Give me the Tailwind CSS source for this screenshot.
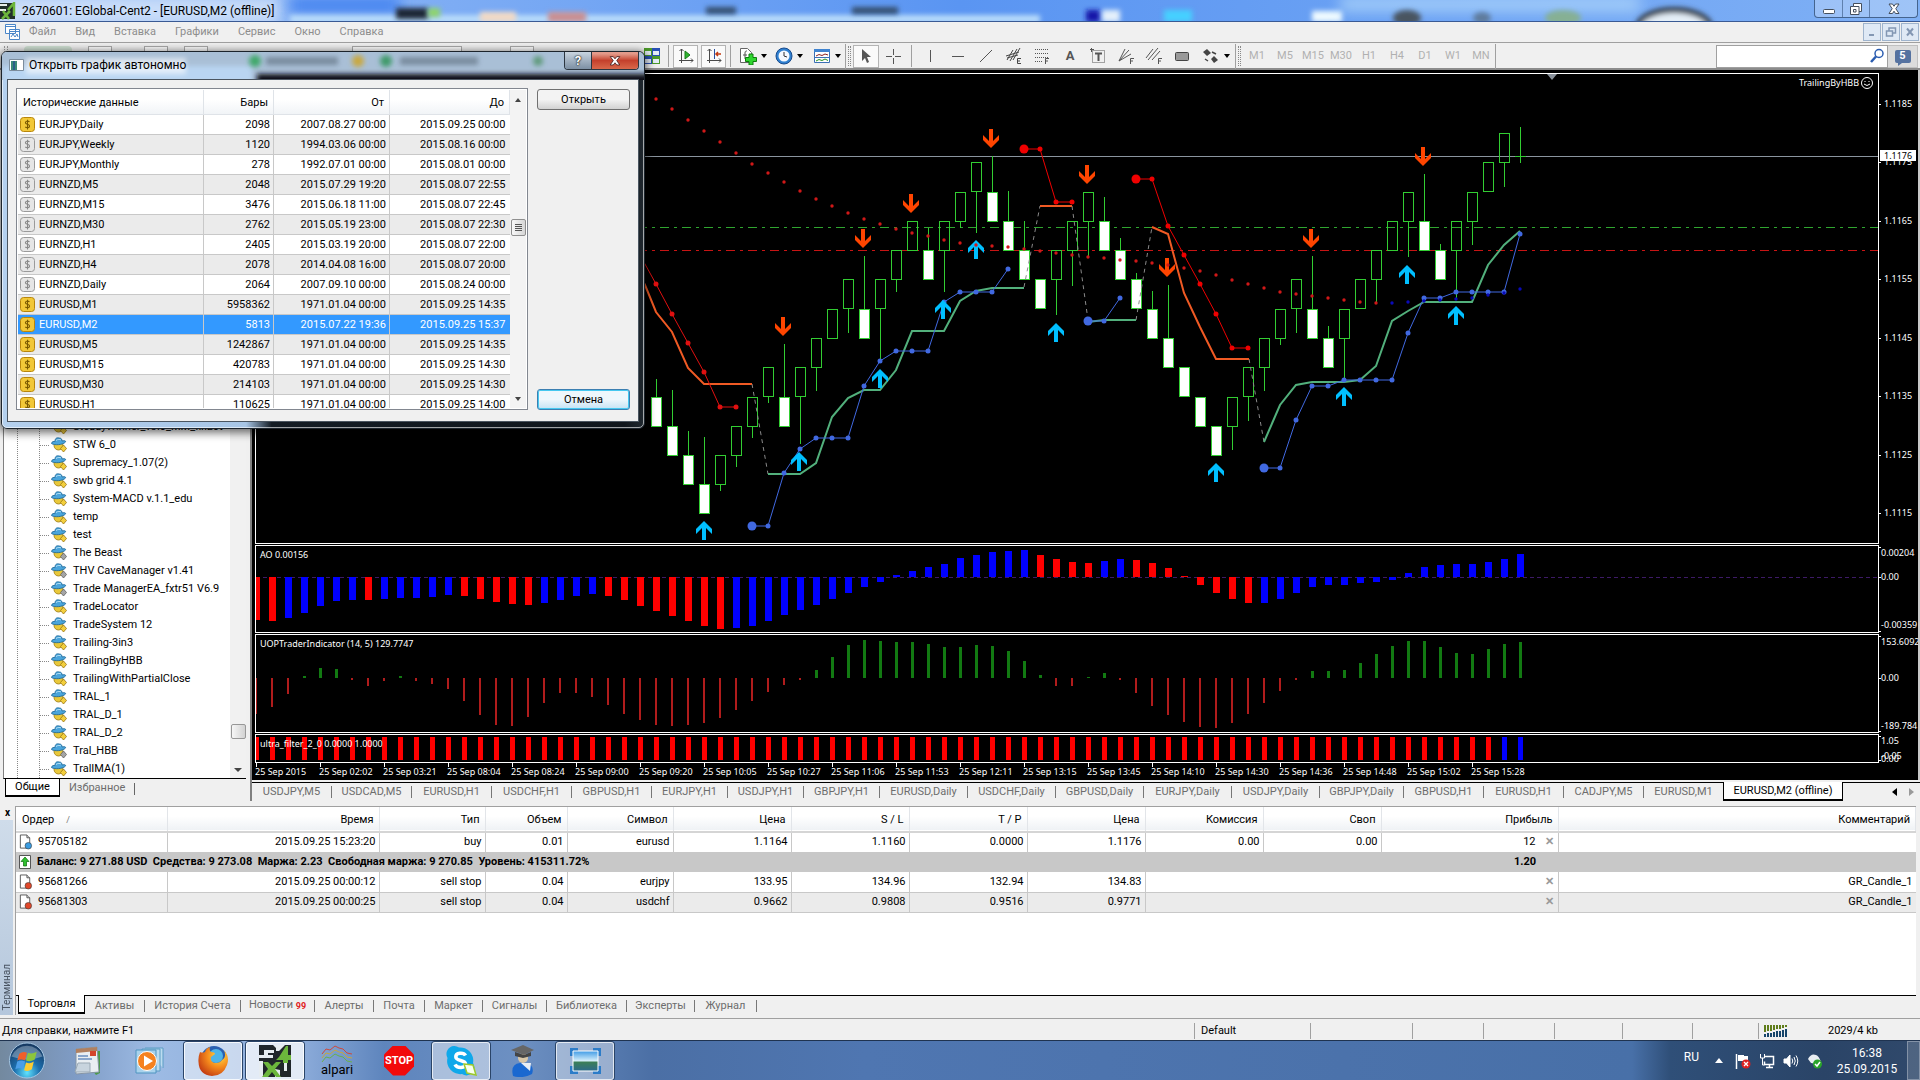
<!DOCTYPE html>
<html lang="ru">
<head>
<meta charset="utf-8">
<title>2670601: EGlobal-Cent2 - [EURUSD,M2 (offline)]</title>
<script src="https://cdn.jsdelivr.net/npm/@tailwindcss/browser@4"></script>
</head>
<body class="relative flex min-h-screen w-full flex-col overflow-x-hidden bg-[#f0f0f0] font-[Roboto,'Liberation_Sans',sans-serif] text-[11px] leading-4 text-black">

<svg class="absolute h-0 w-0" aria-hidden="true">
  <defs>
    <g id="hat">
      <circle cx="7.500" cy="8.500" r="4.500" fill="#e9c83a" stroke="#9c7a10" stroke-width=".8"/>
      <path d="M.5 6.500C1 4 3 4.500 4 4.500C4 1 6 .5 8 1C11 1 11 3 11 4C13 3.500 15 3.500 14.500 5C12 8 3 8.500 .5 6.500Z" fill="#4aa5dc" stroke="#1f6b9c" stroke-width=".9"/>
      <path d="M5 3.500c2-1.500 4-1.300 5-.5" stroke="#b5e2f7" fill="none"/>
    </g>
    <g id="ea"><use href="#hat"/><path d="M12.500 8l3 3.500-3 3.500-3-3.500z" fill="#f3cf3d" stroke="#9a7612" stroke-width=".8"/></g>
    <g id="eaoff"><use href="#hat"/><path d="M12.500 8l3 3.500-3 3.500-3-3.500z" fill="#a5a5a5" stroke="#5f5f5f" stroke-width=".8"/></g>
    <g id="dollar"><path d="M9.500 4.800C8 3.700 5.300 4 5.400 5.700C5.500 7.600 9.500 7 9.600 9C9.700 10.900 6.800 11 5.200 10M7.500 2.800v9.600" fill="none" stroke-width="1.100"/></g>
    <g id="page"><path d="M2.500.5h7l3 3v11h-10z" fill="#fff" stroke="#555"/><path d="M9.500.5v3h3" fill="#ddd" stroke="#555"/></g>
    <filter id="b1" x="-50%" y="-100%" width="200%" height="300%"><feGaussianBlur stdDeviation="2.500"/></filter>
    <filter id="b2" x="-20%" y="-100%" width="140%" height="300%"><feGaussianBlur stdDeviation="7"/></filter>
    <radialGradient id="orb" cx=".5" cy=".85" r=".8"><stop offset="0" stop-color="#5fe3ff"/><stop offset=".45" stop-color="#1c6fae"/><stop offset="1" stop-color="#173a63"/></radialGradient>
    <radialGradient id="fox" cx=".7" cy=".3" r=".8"><stop offset="0" stop-color="#ffe04a"/><stop offset=".5" stop-color="#f58a1c"/><stop offset="1" stop-color="#c23a12"/></radialGradient>
    <linearGradient id="sky" x2="0" y2="1"><stop offset="0" stop-color="#3f9be6"/><stop offset=".5" stop-color="#d8f0fa"/><stop offset=".55" stop-color="#3c7f56"/><stop offset="1" stop-color="#2d6a8c"/></linearGradient>
  </defs>
</svg>

<!-- Title bar -->
<header class="relative flex h-[22px] items-center overflow-hidden border-b border-[#3a5a94] bg-gradient-to-r from-[#9cc0f5] via-[#5a95f2] to-[#7fb0f5]">
  <svg class="absolute inset-0 h-full w-full" aria-hidden="true">
    <rect x="-20" y="-4" width="300" height="30" fill="#dce9fb" opacity=".75" filter="url(#b2)"/>
    <rect x="290" y="-2" width="110" height="14" fill="#3b7df0" filter="url(#b2)"/>
    <rect x="290" y="15" width="750" height="8" fill="#b8dbfa" filter="url(#b1)"/>
    <rect x="396" y="8" width="32" height="11" fill="#1c2834" filter="url(#b1)"/>
    <rect x="428" y="8" width="12" height="9" fill="#8fd46a" filter="url(#b1)"/>
    <rect x="480" y="12" width="36" height="10" fill="#f1d9c6" filter="url(#b1)"/>
    <rect x="548" y="12" width="38" height="10" fill="#c98f92" filter="url(#b1)"/>
    <rect x="706" y="7" width="30" height="7" fill="#35506e" filter="url(#b1)"/>
    <rect x="852" y="7" width="46" height="7" fill="#35506e" filter="url(#b1)"/>
    <rect x="1086" y="10" width="14" height="12" fill="#1218a8" filter="url(#b1)"/>
    <rect x="1102" y="10" width="18" height="12" fill="#e4f0fb" filter="url(#b1)"/>
    <rect x="1164" y="10" width="28" height="12" fill="#45d0ff" filter="url(#b1)"/>
    <rect x="1312" y="11" width="30" height="11" fill="#eefaff" filter="url(#b1)"/>
    <rect x="1340" y="-4" width="300" height="16" fill="#b5dcfb" opacity=".7" filter="url(#b2)"/>
    <ellipse cx="1407" cy="18" rx="14" ry="8" fill="#4a5560" filter="url(#b1)"/>
    <ellipse cx="1482" cy="18" rx="9" ry="6" fill="#5f7c9c" filter="url(#b1)"/>
    <ellipse cx="1563" cy="18" rx="18" ry="8" fill="#86b094" filter="url(#b1)"/>
    <ellipse cx="1674" cy="27" rx="36" ry="17" fill="#e4eef7" stroke="#34404e" stroke-width="6" filter="url(#b1)"/>
  </svg>
  <svg class="relative h-[18px] w-4 shrink-0" viewBox="0 0 16 18" aria-hidden="true"><path d="M0 1h15v16H0z" fill="#22302a"/><path d="M0 3h7M0 8h6" stroke="#e8efe9" stroke-width="2"/><path d="M8 8l6-7v13M2 17l8-8M3 9l6 8" stroke="#6cb63c" stroke-width="2.500" fill="none"/></svg>
  <h1 class="relative pl-1.5 text-[12px]">2670601: EGlobal-Cent2 - [EURUSD,M2 (offline)]</h1>
  <div class="relative mr-0.5 ml-auto flex h-[18px] self-start overflow-hidden rounded-b-[4px] border border-t-0 border-[#44648f] bg-white/25">
    <button class="flex w-[28px] items-center justify-center border-r border-[#44648f]/70" aria-label="Свернуть"><svg class="h-4 w-4" viewBox="0 0 16 16"><rect x="2.500" y="8.500" width="11" height="4" rx="1" fill="#fff" stroke="#444f5e"/></svg></button>
    <button class="flex w-[27px] items-center justify-center border-r border-[#44648f]/70" aria-label="Восстановить"><svg class="h-4 w-4" viewBox="0 0 16 16"><path d="M5.500 2.500h8v8h-2.500v3H2.500v-8h3z" fill="#fff" stroke="#444f5e"/><path d="M5.500 8.500h2.500v2.500h-2.500zM5.500 5.500h5.500v5" fill="none" stroke="#444f5e"/></svg></button>
    <button class="flex w-[47px] items-center justify-center" aria-label="Закрыть"><svg class="h-4 w-4" viewBox="0 0 16 16"><path d="M3 3h3.500L8 5.300 9.500 3H13l-3.200 4.700 3.200 4.800H9.500L8 10.200 6.500 12.500H3l3.200-4.800z" fill="#fff" stroke="#444f5e"/></svg></button>
  </div>
</header>

<!-- Menu -->
<nav class="flex h-[21px] items-center border-b border-[#a0a0a0] text-[11px] text-[#8d8d8d]">
  <svg class="mx-[5px] h-4 w-[15px] shrink-0" viewBox="0 0 15 16" fill="#fff" stroke="#4a86c8"><path d="M.5.500h10v9H.500zM4.500 5.500h10v10h-10z"/><path d="M.5 2.500h10M4.500 7.500h10M6 13l2-3 2 3 2-3 1 3" fill="none"/></svg>
  <div class="flex gap-[19px] pl-1">
    <a href="#">Файл</a><a href="#">Вид</a><a href="#">Вставка</a><a href="#">Графики</a><a href="#">Сервис</a><a href="#">Окно</a><a href="#">Справка</a>
  </div>
  <div class="ml-auto flex gap-px pr-px">
    <button class="flex h-[18px] w-[18px] items-center justify-center border border-[#9fb4cd] bg-[#dfe9f5]" aria-label="Свернуть окно"><svg class="h-3 w-3" viewBox="0 0 12 12"><path d="M3 9h5" stroke="#8397b3" stroke-width="2"/></svg></button>
    <button class="flex h-[18px] w-[18px] items-center justify-center border border-[#9fb4cd] bg-[#dfe9f5]" aria-label="Восстановить окно"><svg class="h-3 w-3" viewBox="0 0 12 12" fill="none" stroke="#8397b3" stroke-width="1.500"><path d="M4 4.500V2h6.500v5H8M1.500 5h6v5h-6z"/></svg></button>
    <button class="flex h-[18px] w-[18px] items-center justify-center border border-[#9fb4cd] bg-[#dfe9f5]" aria-label="Закрыть окно"><svg class="h-3 w-3" viewBox="0 0 12 12"><path d="M3 2.500l6 7M9 2.500l-6 7" stroke="#8397b3" stroke-width="2"/></svg></button>
  </div>
</nav>

<!-- Toolbar -->
<div class="flex h-[27px] items-center border-b-2 border-[#8c8c8c] bg-[#f0f0f0] pt-px" id="toolbar">
  <div class="flex w-[644px] shrink-0 items-start gap-4 self-start pt-0.5 pl-1">
    <span class="h-4 w-1 border-x border-dotted border-[#999]"></span><span class="h-4 w-12 rounded bg-[#cfe0d2]"></span><span class="h-4 w-6 border border-[#aaa] bg-white"></span><span class="ml-4 h-4 w-6 border border-[#aaa] bg-white"></span><span class="h-4 w-6 border border-[#aaa] bg-white"></span>
    <span class="ml-32 h-4 w-[110px] border border-[#aaa] bg-white"></span><span class="ml-8 h-4 w-6 border border-[#aaa] bg-white"></span>
  </div>
  <button class="w-6 shrink-0" aria-label="Расположить окна"><svg class="h-[18px] w-4" viewBox="0 0 16 18"><path d="M0 1h8v8H0z" fill="#4c9a2a"/><path d="M8 1h8v8H8z" fill="#2850b4"/><path d="M0 9h8v8H0z" fill="#2850b4"/><path d="M8 9h8v8H8z" fill="#4c9a2a"/><path d="M1 4h6v4H1zM9 4h6v4H9zM1 12h6v4H1zM9 12h6v4H9z" fill="#e4ecf6"/></svg></button>
  <i class="mr-1 h-[22px] w-px shrink-0 bg-[#a0a0a0]"></i>
  <button class="flex h-[23px] w-[25px] shrink-0 items-center justify-center border border-[#b4b4b4] bg-[#fafafa]" aria-label="Автопрокрутка"><svg class="h-4 w-4" viewBox="0 0 16 16" fill="none" stroke="#4a4a4a"><path d="M3.500 1v14M1 12.500h14M1.500 3l2-2 2 2M13 10.500l2 2-2 2"/><path d="M7 3l5 4-5 4z" fill="#2fb52f" stroke="#1a7a1a"/></svg></button>
  <button class="ml-[3px] flex h-[23px] w-[25px] shrink-0 items-center justify-center border border-[#b4b4b4] bg-[#fafafa]" aria-label="Сдвиг графика"><svg class="h-4 w-4" viewBox="0 0 16 16" fill="none" stroke="#4a4a4a"><path d="M3.500 1v14M1 12.500h14M1.500 3l2-2 2 2M13 10.500l2 2-2 2"/><path d="M8.500 1v10" stroke="#2850a0"/><path d="M15 6h-5M12 4l-2 2 2 2" stroke="#c23a12" stroke-width="1.500"/></svg></button>
  <i class="mx-1 h-[22px] w-px shrink-0 bg-[#a0a0a0]"></i>
  <button class="flex w-9 shrink-0 items-center gap-1 pl-1" aria-label="Индикаторы"><svg class="h-[18px] w-[18px]" viewBox="0 0 18 18"><path d="M1.500 1.500h7l4 4v10h-11z" fill="#fff" stroke="#666"/><path d="M6 12V6c0-2 1-2 2-2M4 8h4" stroke="#555" fill="none"/><path d="M10 7h4v3.500h3.500v4H14V18h-4v-3.500H6.500v-4H10z" fill="#2fd52f" stroke="#0d7d0d"/></svg><span class="border-x-[3px] border-t-4 border-x-transparent border-t-black"></span></button>
  <button class="flex w-[38px] shrink-0 items-center gap-1 pl-1" aria-label="Периоды"><svg class="h-[18px] w-[18px]" viewBox="0 0 18 18"><circle cx="9" cy="9" r="8" fill="#2f80d0" stroke="#174a8c"/><circle cx="9" cy="9" r="5.500" fill="#f4f9ff"/><path d="M9 5v4l3 1" stroke="#333" fill="none"/></svg><span class="border-x-[3px] border-t-4 border-x-transparent border-t-black"></span></button>
  <button class="flex w-9 shrink-0 items-center gap-1 pl-1" aria-label="Шаблоны"><svg class="h-[18px] w-[18px]" viewBox="0 0 18 18"><path d="M1.500 2.500h15v13h-15z" fill="#fff" stroke="#3a6fb5"/><path d="M1 2h16v3H1z" fill="#3f83d0"/><path d="M3 9l3-1.500 3 1 3-1.500 3 1" stroke="#8a2222" fill="none"/><path d="M2 10.500h14" stroke="#3a6fb5"/><path d="M3 14l3-1.500 3 1 3-1.500 3 1.500" stroke="#229022" fill="none"/></svg><span class="border-x-[3px] border-t-4 border-x-transparent border-t-black"></span></button>
  <i class="h-[25px] w-px shrink-0 bg-[#a0a0a0]"></i>
  <i class="mx-[2px] h-5 w-[3px] shrink-0 border-x border-dotted border-[#888]"></i>
  <button class="flex h-[23px] w-[26px] shrink-0 items-center justify-center border border-[#b4b4b4] bg-[#fafafa]" aria-label="Курсор"><svg class="h-4 w-4" viewBox="0 0 16 16"><path d="M4 1v12l3-3 2 5 2-1-2-5h4z" fill="#555"/></svg></button>
  <button class="flex w-7 shrink-0 justify-center" aria-label="Перекрестие"><svg class="h-4 w-4" viewBox="0 0 16 16" stroke="#555"><path d="M8.500 1v6M8.500 10v6M1 8.500h6M10 8.500h6"/></svg></button>
  <i class="mx-1 h-[22px] w-px shrink-0 bg-[#a0a0a0]"></i>
  <button class="flex w-7 shrink-0 justify-center" aria-label="Вертикальная линия"><svg class="h-4 w-4" viewBox="0 0 16 16" stroke="#555"><path d="M8.500 2v12"/></svg></button>
  <button class="flex w-7 shrink-0 justify-center" aria-label="Горизонтальная линия"><svg class="h-4 w-4" viewBox="0 0 16 16" stroke="#555"><path d="M2 8.500h12"/></svg></button>
  <button class="flex w-7 shrink-0 justify-center" aria-label="Трендовая линия"><svg class="h-4 w-4" viewBox="0 0 16 16" stroke="#555"><path d="M2 14L14 2"/></svg></button>
  <button class="flex w-7 shrink-0 justify-center" aria-label="Канал"><svg class="h-[18px] w-[18px]" viewBox="0 0 18 18" stroke="#444" fill="none"><path d="M2 13L8 3M5 14l7-12M8 13l7-12M1 9l13-4M2 11l11-3"/><path d="M16 11.500h-3.500v5H16M12.500 14H15"/></svg></button>
  <button class="flex w-7 shrink-0 justify-center" aria-label="Фибоначчи"><svg class="h-[18px] w-[18px]" viewBox="0 0 18 18" stroke="#555" fill="none"><path d="M2 2.500h14M2 6.500h14M2 10.500h14M2 14.500h8" stroke-dasharray="1 1"/><path d="M16 11.500h-3.500V17M12.500 14H15"/></svg></button>
  <button class="w-7 shrink-0 text-center text-[13px] font-bold text-[#555]" aria-label="Текст">A</button>
  <button class="flex w-7 shrink-0 justify-center" aria-label="Метка"><svg class="h-[18px] w-[18px]" viewBox="0 0 18 18" stroke="#555" fill="none"><path d="M3.500 3.500h12v12h-12z" stroke-dasharray="1 1"/><path d="M6 6.500h7M9.500 6v8" stroke-width="2"/><path d="M1 2.500h4M2.500 1v4"/></svg></button>
  <button class="flex w-7 shrink-0 justify-center" aria-label="Веер"><svg class="h-[18px] w-[18px]" viewBox="0 0 18 18" stroke="#555" fill="none"><path d="M2 14L8 2M2 14L12 3M2 14L14 7"/><path d="M17 11.500h-3.500V17M13.500 14H16"/></svg></button>
  <button class="flex w-7 shrink-0 justify-center" aria-label="Параллельные линии"><svg class="h-[18px] w-[18px]" viewBox="0 0 18 18" stroke="#555" fill="none"><path d="M1 11L8 2M3 13L13 1M7 13l8-9"/><path d="M17 11.500h-3.500V17M13.500 14H16"/></svg></button>
  <button class="flex w-7 shrink-0 justify-center" aria-label="Прямоугольник"><svg class="h-4 w-4" viewBox="0 0 16 16"><rect x="1.500" y="4.500" width="13" height="8" rx="1" fill="#9a9a9a" stroke="#444"/></svg></button>
  <button class="flex w-[39px] shrink-0 items-center gap-1 pl-1.5" aria-label="Стрелки"><svg class="h-4 w-[18px]" viewBox="0 0 18 16" fill="#444"><path d="M5 1l4 4-4 3-4-4zM12 8l4 4-4 3-3-4z"/><path d="M10 4l4 2M3 11l3 2" stroke="#444" stroke-width="1.500"/></svg><span class="border-x-[3px] border-t-4 border-x-transparent border-t-black"></span></button>
  <i class="h-[25px] w-px shrink-0 bg-[#a0a0a0]"></i>
  <i class="mx-[2px] h-5 w-[3px] shrink-0 border-x border-dotted border-[#888]"></i>
  <div class="flex shrink-0 text-[#b0b0b0]">
    <button class="w-7">M1</button><button class="w-7">M5</button><button class="w-7">M15</button><button class="w-7">M30</button><button class="w-7">H1</button><button class="w-7">H4</button><button class="w-7">D1</button><button class="w-7">W1</button><button class="w-7">MN</button>
  </div>
  <i class="h-[25px] w-px shrink-0 bg-[#a0a0a0]"></i>
  <div class="ml-auto flex h-[23px] items-center border border-[#a0a0a0] bg-white">
    <input class="h-full w-[152px] px-1 outline-none" aria-label="Поиск">
    <svg class="mr-0.5 h-4 w-4" viewBox="0 0 16 16" fill="none"><circle cx="10" cy="5.500" r="4" stroke="#2a5cb0" stroke-width="1.500"/><path d="M7 8.500L2 14" stroke="#2a5cb0" stroke-width="2.500"/></svg>
  </div>
  <button class="mr-0.5 flex h-[23px] w-[30px] items-center justify-center border border-l-0 border-[#c0c0c0] bg-[#dcdcdc]" aria-label="Сообщения">
    <span class="relative flex h-[13px] w-4 items-center justify-center rounded-[2px] bg-[#5572a0] text-[11px] font-bold text-white">5<i class="absolute top-full left-[3px] border-t-[3px] border-r-4 border-t-[#5572a0] border-r-transparent"></i></span>
  </button>
</div>

<!-- Navigator and chart -->
<main class="flex bg-[#f0f0f0]">
  <aside class="relative flex w-[252px] shrink-0 flex-col border-r-2 border-[#808080] pb-0.5 pl-[3px]">
    <div class="mr-1 flex h-[709px] border-b border-l border-[#808080] border-b-black bg-white">
      <div class="relative flex flex-1 flex-col justify-end overflow-hidden">
        <i class="absolute top-0 bottom-0 left-[13px] border-l border-dotted border-[#888]"></i>
        <i class="absolute top-0 bottom-0 left-[35px] border-l border-dotted border-[#888]"></i>
        <ul id="tree"></ul>
      </div>
      <div class="flex w-4 flex-col items-center justify-end bg-[#f1f1f1]">
        <span class="mb-[29px] h-[15px] w-[15px] rounded-[2px] border border-[#979797] bg-gradient-to-r from-[#f6f6f6] to-[#d2d2d2]"></span>
        <span class="mb-1.5 border-x-4 border-t-4 border-x-transparent border-t-[#444]"></span>
      </div>
    </div>
    <div class="flex h-[19px] items-start pl-[2px] text-[11px]">
      <button class="h-[18px] w-[55px] border border-t-0 border-b-2 border-black bg-white">Общие</button>
      <button class="mt-px px-[9px] text-[#6d6d6d]">Избранное</button><i class="mt-1 h-3 w-px bg-[#666]"></i>
    </div>
  </aside>

  <section class="flex min-w-0 flex-1 flex-col">
    <div class="border-r-2 border-[#c8c8c8] bg-black pt-[3px] pl-[3px] font-['Noto_Sans',sans-serif] text-[9px]">
      <div class="flex flex-col gap-px" id="panels">
        <div class="flex"><svg class="h-[471px] min-w-0 flex-1 border border-white" id="main"></svg><svg class="h-[471px] w-[39px] shrink-0" id="axMain"></svg></div>
        <div class="flex"><svg class="h-[88px] min-w-0 flex-1 border border-white" id="ao"></svg><svg class="h-[88px] w-[39px] shrink-0" id="axAo"></svg></div>
        <div class="flex"><svg class="h-[99px] min-w-0 flex-1 border border-white" id="uop"></svg><svg class="h-[99px] w-[39px] shrink-0" id="axUop"></svg></div>
        <div class="flex"><svg class="h-[29px] min-w-0 flex-1 border border-white" id="ultra"></svg><svg class="h-[29px] w-[39px] shrink-0" id="axUltra"></svg></div>
      </div>
      <svg class="block h-[17px] w-full" id="time"></svg>
    </div>
    <div class="mt-0.5 flex h-[19px] border-t border-black text-[#6d6d6d]" id="ctabs"></div>
  </section>
</main>

<!-- Terminal -->
<section class="flex flex-1 border-b border-[#a0a0a0] pt-[5px] pr-1 pb-[3px]">
  <div class="flex w-4 shrink-0 flex-col border-r border-[#a0a0a0]">
    <button class="h-[14px] text-[10px] leading-[10px] font-bold" aria-label="Закрыть терминал">x</button>
    <div class="mr-0.5 flex flex-1 items-end justify-center bg-gradient-to-b from-[#cfdcea] to-[#b5c7dc] pb-1">
      <span class="rotate-180 text-[10px] leading-3 text-[#4a5563] [writing-mode:vertical-rl]">Терминал</span>
    </div>
  </div>
  <div class="flex min-w-0 flex-1 flex-col border-t border-[#a0a0a0] bg-white">
    <table class="w-full table-fixed border-collapse text-right">
      <colgroup><col class="w-[151px]"><col class="w-[212px]"><col class="w-[106px]"><col class="w-[82px]"><col class="w-[106px]"><col class="w-[118px]"><col class="w-[118px]"><col class="w-[118px]"><col class="w-[118px]"><col class="w-[118px]"><col class="w-[118px]"><col class="w-[177px]"><col></colgroup>
      <thead><tr class="h-[25px] border-b-2 border-[#d5d5d5] bg-gradient-to-b from-white from-40% to-[#eff2f5]" id="thead"></tr></thead>
      <tbody id="orders"></tbody>
    </table>
    <div class="mt-auto flex h-5 border-t border-black bg-[#f0f0f0] text-[#6d6d6d]" id="ttabs"></div>
  </div>
</section>

<!-- Status bar -->
<footer class="flex h-[21px] items-center pt-0.5">
  <span class="flex-1 pl-0.5 text-[11px]">Для справки, нажмите F1</span>
  <span class="w-[116px] border-l border-[#a0a0a0] pl-1.5">Default</span>
  <i class="h-4 w-[102px] border-l border-[#a0a0a0]"></i><i class="h-4 w-[71px] border-l border-[#a0a0a0]"></i><i class="h-4 w-[71px] border-l border-[#a0a0a0]"></i><i class="h-4 w-[68px] border-l border-[#a0a0a0]"></i><i class="h-4 w-[70px] border-l border-[#a0a0a0]"></i><i class="h-4 w-[66px] border-l border-[#a0a0a0]"></i>
  <span class="flex w-[162px] items-center border-l border-[#a0a0a0] pl-[5px]">
    <svg class="h-3 w-6" viewBox="0 0 24 12"><path d="M1 0v7M4 0v6M7 0v6M10 0v5M13 0v4M16 0v4M19 0v3M22 0v2" stroke="#5f7d1a" stroke-width="2"/><path d="M1 9v3M4 8v4M7 8v4M10 7v5M13 6v6M16 6v6M19 5v7M22 4v8" stroke="#16456b" stroke-width="2"/></svg>
    <span class="pl-10">2029/4 kb</span>
  </span>
</footer>

<!-- Taskbar -->
<div class="flex h-10 items-center border-t border-[#1f3350] [background-image:linear-gradient(90deg,#73899f_0,#7f9cc6_4%,#9dbbe4_8%,#89a9d8_16%,#5e85bd_20%,#6d90c2_27%,#4b6fa5_34%,#4f76b1_45%,#4b72ab_70%,#4870a8_85%,#2f4f78_87%,#2a4467_95%,#30496b_100%)]">
  <button class="mr-[18px] ml-2 shrink-0" aria-label="Пуск"><svg class="h-[37px] w-[38px]" viewBox="0 0 38 38"><circle cx="19" cy="19" r="18" fill="url(#orb)" stroke="#a8c8e4"/><path d="M3 15a17 17 0 0 1 32 0q-16 6-32 0z" fill="#fff" opacity=".3"/><path d="M11 12q4-3 8-1l-2 8q-4-2-8 0z" fill="#f0602a"/><path d="M20 11q4 2 9-1l-2 8q-5 3-9 1z" fill="#8cc63c"/><path d="M9 20q4-2 8 0l-2 8q-4-2-8 0z" fill="#4a9ee8"/><path d="M18 21q4 2 8-1l-2 8q-4 3-8 1z" fill="#fbcb32"/></svg></button>
  <button class="flex h-10 w-[62px] shrink-0 items-center justify-start pl-2" aria-label="Почта"><svg class="h-8 w-8" viewBox="0 0 32 32"><path d="M6 6h22v22l-4 2z" fill="#4c9a4a"/><path d="M4 4l21-2 2 25-23 2z" fill="#e9eef2" stroke="#8695a5"/><path d="M4 4l21-2v4L4 8z" fill="#b08060"/><path d="M18 6h6v5h-6z" fill="#d4452c"/><path d="M6 11h10M6 14h14" stroke="#6a8fc0" stroke-width="1.500"/><path d="M6 18h12v9H3z" fill="#c8d4de" stroke="#9aa9b5"/></svg></button>
  <button class="flex h-10 w-[58px] shrink-0 items-center justify-start pl-2" aria-label="Проигрыватель"><svg class="h-8 w-8" viewBox="0 0 32 32"><path d="M8 4h18v22H8zM11 3h18v20" fill="#bcdcf0" stroke="#5a9cc4"/><path d="M2 5h20v23H2z" fill="#a8d2ec" stroke="#4f94c0"/><circle cx="13" cy="16" r="9.500" fill="#f58220" stroke="#fff"/><path d="M10 10.500l9 5.500-9 5.500z" fill="#fff"/></svg></button>
  <button class="mr-1 flex h-[38px] w-[58px] shrink-0 items-center justify-center rounded-[3px] border border-white/80 bg-white/50 shadow-[0_0_0_1px_#2a4468]" aria-label="Firefox"><svg class="h-8 w-8" viewBox="0 0 32 32"><circle cx="17" cy="14" r="13" fill="#2a5fb0"/><circle cx="19" cy="11" r="7" fill="#4fb4e8"/><path d="M3 7Q5 8 8 7Q9 3 13 2Q12 5 14 7Q18 7 18 9L14 12Q13 18 19 18Q23 18 25 15Q30 12 27 5Q33 12 30 20Q26 31 15 31Q2 30 1.500 17Q1 12 3 7Z" fill="url(#fox)"/></svg></button>
  <button class="mr-1 flex h-[38px] w-[58px] shrink-0 items-center justify-center rounded-[3px] border border-white/80 bg-white/75 shadow-[0_0_0_1px_#2a4468]" aria-label="MetaTrader"><svg class="h-8 w-8" viewBox="0 0 32 32"><path d="M0 0h32v32H0z" fill="#20262a"/><path d="M5 5h10v3H9v2h5v3H0v-3h5z" fill="#e6ecf0"/><path d="M14 0L17 3v3h3L26 0z" fill="#e6ecf0"/><path d="M25 18h3v8h-3zM16 24l5 1v7h-5zM0 16h4v16H0z" fill="#e6ecf0"/><path d="M20 12L27 1h2v9h3v5h-3v3h-5v-3h-7zM4 17h5l4 4 4-4h5l-6 7 6 8h-5l-4-5-4 5H3l6-8z" fill="#6cb63c"/></svg></button>
  <button class="flex h-10 w-[58px] shrink-0 flex-col items-center justify-center text-[13px] leading-[14px]" aria-label="alpari"><svg class="h-[18px] w-8" viewBox="0 0 32 18" fill="none"><path d="M1 9l4-5 4 1 5-4 4 2 4 1 4 4 5 1" stroke="#d0483a"/><path d="M1 13l4-5 4 1 5-4 4 2 4 1 4 4 5 1" stroke="#c8a83a"/><path d="M1 17l4-5 4 1 5-4 4 2 4 1 4 4 5 1" stroke="#6ab04a"/></svg>alpari</button>
  <button class="flex h-10 w-[66px] shrink-0 items-center justify-center" aria-label="Stop"><span class="flex h-[30px] w-[30px] items-center justify-center bg-[#f20a0a] text-[11px] font-bold text-white [clip-path:polygon(30%_0,70%_0,100%_30%,100%_70%,70%_100%,30%_100%,0_70%,0_30%)]">STOP</span></button>
  <button class="flex h-[38px] w-[58px] shrink-0 items-center justify-center rounded-[3px] border border-white/70 bg-white/45 shadow-[0_0_0_1px_#2a4468]" aria-label="Skype"><svg class="h-8 w-8" viewBox="0 0 32 32"><path d="M9 1a8 8 0 0 1 5 1.500A13 13 0 0 1 28 18a8 8 0 0 1-11 11A13 13 0 0 1 2.500 13A8 8 0 0 1 9 1z" fill="#0fa8ea"/><path d="M20.500 10.500C18.500 7 10.500 7.500 10.800 12C11 16.500 20.500 14.500 20.500 19C20.500 23.500 12 23.500 10 19.500" fill="none" stroke="#fff" stroke-width="3.500"/><path d="M19 19l9 1 3 10-9-2z" fill="#f8fff0" stroke="#9cc92c" stroke-width="1.500"/></svg></button>
  <button class="flex h-10 w-[66px] shrink-0 items-center justify-center" aria-label="Советник"><svg class="h-8 w-6" viewBox="0 0 24 32"><path d="M2 31Q-1 19 9 18h6q9 2 6 11-9 5-19 2z" fill="#1a68d0"/><path d="M10 18l9 8 1-8z" fill="#e8eef5"/><circle cx="12" cy="13" r="5" fill="#d9c7a8"/><path d="M0 5l12-5 11 5-10 5z" fill="#666"/><path d="M4 7l9 3 7-3v4l-8 2-8-2z" fill="#444"/></svg></button>
  <button class="flex h-[38px] w-[58px] shrink-0 items-center justify-center rounded-[3px] border border-white/70 bg-white/40 shadow-[0_0_0_1px_#2a4468]" aria-label="Просмотр изображений"><svg class="h-[26px] w-[31px]" viewBox="0 0 31 26"><path d="M0 0h8v3H3v5H0zM31 0h-8v3h5v5h3zM0 26h8v-3H3v-5H0zM31 26h-8v-3h5v-5h3z" fill="#2c7cc8"/><path d="M3 3h25v20H3z" fill="url(#sky)" stroke="#fff"/></svg></button>
  <div class="ml-auto flex items-center text-[12px] text-white">
    <span class="mr-4 pb-2">RU</span>
    <span class="mr-3 border-x-4 border-b-[5px] border-x-transparent border-b-white"></span>
    <svg class="mr-2 h-4 w-4" viewBox="0 0 16 16"><path d="M1.500 1v15" stroke="#fff" stroke-width="1.500"/><path d="M3 2h6v1h4v6H8V8H3z" fill="#fff"/><circle cx="11" cy="11" r="4.500" fill="#d22"/><path d="M9 9l4 4M13 9l-4 4" stroke="#fff" stroke-width="1.300"/></svg>
    <svg class="mr-2 h-4 w-4" viewBox="0 0 16 16" fill="none" stroke="#fff"><path d="M6 3.500h8.500v8H5.500v-3M7 14.500h7M10.500 12v2" stroke-width="1.500"/><path d="M1.500 1v4h4V1M3.500 5v7h2"/></svg>
    <svg class="mr-2 h-4 w-4" viewBox="0 0 16 16" fill="none" stroke="#fff"><path d="M1 6h2.500L7 2v12L3.500 10H1z" fill="#fff"/><path d="M9 5.500q1.500 2.500 0 5M11 4q2.500 4 0 8M13 2.500q3.500 5.500 0 11"/></svg>
    <svg class="mr-1 h-4 w-4" viewBox="0 0 16 16"><path d="M1 6q3-6 8-4 3 1 5 7l-4 2-6-1z" fill="#e8edf2"/><circle cx="10.500" cy="11" r="4.500" fill="#2aa52a"/><path d="M8 11l2 2 3-4" stroke="#fff" stroke-width="1.500" fill="none"/></svg>
    <time class="w-20 text-center leading-4">16:38<br>25.09.2015</time>
    <button class="h-[39px] w-[13px] border border-white/30 bg-white/15" aria-label="Свернуть все окна"></button>
  </div>
</div>

<!-- Open offline chart dialog -->
<div role="dialog" aria-label="Открыть график автономно" class="absolute top-[51px] left-px z-10 flex w-[644px] flex-col overflow-hidden rounded-[6px] border border-[#1c242c] bg-[linear-gradient(90deg,#b4d0ee_0,#a8c6e6_38%,#141c24_42%,#10161c_97%,#20282f_100%)] pr-[5px] pb-[6px] pl-[5px] shadow-[0_2px_8px_2px_rgba(0,0,0,.55)] outline -outline-offset-2 outline-white/60">
  <svg class="absolute inset-x-0 top-0 h-[28px] w-full" aria-hidden="true">
    <rect width="644" height="28" fill="#a9bfd6"/>
    <rect y="14" width="250" height="18" fill="#b9d5f2" filter="url(#b1)"/>
    <rect x="255" y="22" width="410" height="14" fill="#0c1014" filter="url(#b1)"/>
    <circle cx="253" cy="9" r="6" fill="#3fa86a" filter="url(#b1)"/>
    <rect x="264" y="5" width="72" height="8" fill="#5a6a7a" opacity=".6" filter="url(#b1)"/>
    <circle cx="356" cy="9" r="6" fill="#c9a83f" filter="url(#b1)"/>
    <circle cx="384" cy="9" r="6" fill="#3f9a6a" filter="url(#b1)"/>
    <rect x="398" y="5" width="78" height="8" fill="#5a6a7a" opacity=".6" filter="url(#b1)"/>
    <circle cx="536" cy="9" r="5" fill="#5f9a7a" filter="url(#b1)"/>
    <rect x="24" y="6" width="160" height="16" fill="#fff" opacity=".6" filter="url(#b1)"/>
  </svg>
  <div class="relative flex h-[27px] shrink-0 items-center pb-px">
    <svg class="ml-0.5 h-3 w-[15px]" viewBox="0 0 15 12"><path d="M.5.500h14v11H.500z" fill="#fff" stroke="#7c8c9c"/><path d="M2 2h6v9H2z" fill="#3c8a78"/><path d="M4 2h2v9H4z" fill="#2a5f8a"/></svg>
    <h2 class="pl-[5px] text-[12px]">Открыть график автономно</h2>
    <div class="ml-auto flex h-[18px] self-start overflow-hidden rounded-b-[4px] border border-t-0 border-[#2c3640]">
      <button class="w-[27px] border-r border-[#2c3640] bg-gradient-to-b from-[#c9d5e0] to-[#7d90a4] text-[13px] leading-[17px] font-bold text-white [text-shadow:0_0_2px_#000,0_0_1px_#000]" aria-label="Справка">?</button>
      <button class="flex w-[46px] items-center justify-center bg-gradient-to-b from-[#e39a8a] from-10% via-[#c4402c] via-50% to-[#d9684a]" aria-label="Закрыть"><svg class="h-[14px] w-[14px]" viewBox="0 0 16 16"><path d="M2.500 3h3.500L8 5.500 10 3h3.500L10 7.500l3.500 5H10L8 10 6 12.500H2.500L6 7.500z" fill="#fff" stroke="#4a2420"/></svg></button>
    </div>
  </div>
  <div class="relative flex gap-[9px] border border-[#4a5560] bg-[#f0f0f0] p-2 pb-[11px]">
    <div class="flex h-[322px] w-[512px] shrink-0 overflow-hidden border border-[#828790] bg-white p-px">
      <div class="min-w-0 flex-1 overflow-hidden">
        <table class="w-full table-fixed border-collapse text-right">
          <colgroup><col><col class="w-[70px]"><col class="w-[116px]"><col class="w-[120px]"></colgroup>
          <thead><tr class="h-6 bg-gradient-to-b from-white from-40% to-[#f1f4f7]"><th class="border-r border-b border-[#dfe3e8] pt-0.5 pl-[5px] text-left font-normal">Исторические данные</th><th class="border-r border-b border-[#dfe3e8] pt-0.5 pr-[5px] font-normal">Бары</th><th class="border-r border-b border-[#dfe3e8] pt-0.5 pr-[5px] font-normal">От</th><th class="border-r border-b border-[#dfe3e8] pt-0.5 pr-[5px] font-normal">До</th></tr></thead>
          <tbody id="hist"></tbody>
        </table>
      </div>
      <div class="flex w-4 flex-col items-center bg-[#f3f3f3]">
        <span class="mt-2 border-x-[3px] border-b-4 border-x-transparent border-b-[#444]"></span>
        <span class="mt-[117px] flex h-[17px] w-[15px] flex-col items-center justify-center gap-px rounded-[2px] border border-[#8f8f8f] bg-gradient-to-r from-[#f8f8f8] to-[#d6d6d6]"><i class="h-px w-[7px] bg-[#555]"></i><i class="h-px w-[7px] bg-[#555]"></i><i class="h-px w-[7px] bg-[#555]"></i><i class="h-px w-[7px] bg-[#555]"></i></span>
        <span class="mt-auto mb-[7px] border-x-[3px] border-t-4 border-x-transparent border-t-[#444]"></span>
      </div>
    </div>
    <div class="flex w-[94px] flex-col justify-between pt-px">
      <button class="h-[21px] rounded-[3px] border border-[#707070] bg-gradient-to-b from-[#f3f3f3] from-50% to-[#d2d2d2]">Открыть</button>
      <button class="h-[21px] rounded-[3px] border border-[#3c7fb1] bg-gradient-to-b from-[#eef7fc] from-50% to-[#c4e3f4] shadow-[inset_0_0_0_1px_#46c8f0]">Отмена</button>
    </div>
  </div>
</div>

<script>
const $ = id => document.getElementById(id);

// Navigator tree: name, and 0 where the adviser is disabled
const tree = [['SteadyWinner_v3.0_MM_fixLot',1],['STW 6_0',1],['Supremacy_1.07(2)',1],['swb grid 4.1',1],['System-MACD v.1.1_edu',1],['temp',1],['test',1],['The Beast',0],['THV CaveManager v1.41',0],['Trade ManagerEA_fxtr51 V6.9',0],['TradeLocator',1],['TradeSystem 12',1],['Trailing-3in3',1],['TrailingByHBB',1],['TrailingWithPartialClose',1],['TRAL_1',1],['TRAL_D_1',1],['TRAL_D_2',1],['Tral_HBB',0],['TralIMA(1)',1]];
$('tree').innerHTML = tree.map(([n, on]) => `<li class="flex h-[18px] items-center whitespace-nowrap pl-[35px]"><i class="mr-0.5 w-[10px] border-t border-dotted border-[#888]"></i><svg class="mr-1.5 h-4 w-4 shrink-0" viewBox="0 0 16 16"><use href="#${on ? 'ea' : 'eaoff'}"/></svg>${n}</li>`).join('');

// Offline history list
const hist = [['EURJPY,Daily','2098','2007.08.27 00:00','2015.09.25 00:00',1],['EURJPY,Weekly','1120','1994.03.06 00:00','2015.08.16 00:00',0],['EURJPY,Monthly','278','1992.07.01 00:00','2015.08.01 00:00',0],['EURNZD,M5','2048','2015.07.29 19:20','2015.08.07 22:55',0],['EURNZD,M15','3476','2015.06.18 11:00','2015.08.07 22:45',0],['EURNZD,M30','2762','2015.05.19 23:00','2015.08.07 22:30',0],['EURNZD,H1','2405','2015.03.19 20:00','2015.08.07 22:00',0],['EURNZD,H4','2078','2014.04.08 16:00','2015.08.07 20:00',0],['EURNZD,Daily','2064','2007.09.10 00:00','2015.08.24 00:00',0],['EURUSD,M1','5958362','1971.01.04 00:00','2015.09.25 14:35',1],['EURUSD,M2','5813','2015.07.22 19:36','2015.09.25 15:37',1],['EURUSD,M5','1242867','1971.01.04 00:00','2015.09.25 14:35',1],['EURUSD,M15','420783','1971.01.04 00:00','2015.09.25 14:30',1],['EURUSD,M30','214103','1971.01.04 00:00','2015.09.25 14:30',1],['EURUSD,H1','110625','1971.01.04 00:00','2015.09.25 14:00',1]];
$('hist').innerHTML = hist.map((r, i) => {
  const bg = i === 10 ? 'bg-[#3399ff] text-white' : i % 2 ? 'bg-[#ebebeb]' : 'bg-white';
  const ic = r[4] ? '<rect x=".5" y=".5" width="14" height="14" rx="3" fill="#f2c838" stroke="#b8860b"/><g stroke="#7a5a00"><use href="#dollar"/></g>' : '<rect x=".5" y=".5" width="14" height="14" rx="3" fill="#e6e6e6" stroke="#9a9a9a"/><g stroke="#8a8a8a"><use href="#dollar"/></g>';
  return `<tr class="h-5 border-b border-[#c8c8c8] ${bg}"><td class="border-r border-[#c8c8c8] p-0 pt-px"><span class="flex items-center gap-1 pl-0.5"><svg class="h-[15px] w-[15px]" viewBox="0 0 15 15">${ic}</svg>${r[0]}</span></td><td class="border-r border-[#c8c8c8] p-0 pt-px pr-[3px]">${r[1]}</td><td class="border-r border-[#c8c8c8] p-0 pt-px pr-[3px]">${r[2]}</td><td class="p-0 pt-px pr-1">${r[3]}</td></tr>`;
}).join('');

// Terminal table
const heads = ['Ордер','Время','Тип','Объем','Символ','Цена','S / L','T / P','Цена','Комиссия','Своп','Прибыль','Комментарий'];
$('thead').innerHTML = heads.map((h, i) => i ? `<th class="border-r border-[#e2e5e9] p-0 pt-px pr-[5px] font-normal">${h}</th>` : `<th class="border-r border-[#e2e5e9] p-0 pt-px pl-1.5 text-left font-normal">${h}<span class="pl-3 text-[9px] text-[#777]">/</span></th>`).join('');
const closeBtn = '<button class="ml-[9px] w-[9px] text-[11px] font-bold text-[#999]" aria-label="Закрыть ордер">✕</button>';
const orderRow = (r, color, bg) => `<tr class="h-5 border-b border-[#c8c8c8] ${bg}">` + r.map((c, i) => {
  if (i === 0) return `<td class="border-r border-[#c8c8c8] p-0 text-left"><span class="flex items-center gap-[5px] pl-0.5"><svg class="h-4 w-[15px]" viewBox="0 0 16 16"><use href="#page"/><circle cx="11" cy="12" r="3.500" fill="${color}" stroke="#333" stroke-width=".6"/></svg>${c}</span></td>`;
  if (i === 11) return `<td class="border-r border-[#c8c8c8] p-0 pr-1">${c}${closeBtn}</td>`;
  return `<td class="${i === 12 || (i > 8 && !c) ? '' : 'border-r border-[#c8c8c8]'} p-0 pr-[3px]">${c}</td>`;
}).join('') + '</tr>';
$('orders').innerHTML =
  orderRow(['95705182','2015.09.25 15:23:20','buy','0.01','eurusd','1.1164','1.1160','0.0000','1.1176','0.00','0.00','12',''], '#3a9be0', 'bg-white') +
  `<tr class="h-5 bg-[#c8c8c8] font-bold"><td colspan="11" class="p-0 text-left"><span class="flex items-center gap-1.5 whitespace-pre pl-[3px]"><svg class="h-[14px] w-3" viewBox="0 0 12 14"><path d="M.5.500h11v13H.500z" fill="#fff" stroke="#555"/><path d="M6 2l4 4.500H7.500V11h-3V6.500H2z" fill="#2fc02f" stroke="#0a6a0a" stroke-width=".7"/></svg>Баланс: 9 271.88 USD  Средства: 9 273.08  Маржа: 2.23  Свободная маржа: 9 270.85  Уровень: 415311.72%</span></td><td class="p-0 pr-[22px]">1.20</td><td></td></tr>` +
  orderRow(['95681266','2015.09.25 00:00:12','sell stop','0.04','eurjpy','133.95','134.96','132.94','134.83','','','','GR_Candle_1'], '#e0482a', 'bg-white') +
  orderRow(['95681303','2015.09.25 00:00:25','sell stop','0.04','usdchf','0.9662','0.9808','0.9516','0.9771','','','','GR_Candle_1'], '#e0482a', 'bg-[#ebebeb]');

// Tab strips: label and tab width
const ttabs = [['Активы',60],['История Счета',96],['Новости',74],['Алерты',59],['Почта',51],['Маркет',58],['Сигналы',64],['Библиотека',80],['Эксперты',68],['Журнал',62]];
$('ttabs').innerHTML = '<button class="-mt-px ml-0.5 h-[19px] w-[67px] shrink-0 border border-t-0 border-b-2 border-black bg-white text-black">Торговля</button>' +
  ttabs.map(([t, w]) => `<span class="flex shrink-0 items-center justify-center" style="width:${w}px"><button class="flex-1 whitespace-nowrap">${t}${t === 'Новости' ? ' <b class="align-[-1px] text-[9px] text-[#e02020]">99</b>' : ''}</button><i class="h-3 w-px bg-[#777]"></i></span>`).join('');
const ctabs = [['USDJPY,M5',80],['USDCAD,M5',80],['EURUSD,H1',80],['USDCHF,H1',80],['GBPUSD,H1',80],['EURJPY,H1',76],['USDJPY,H1',76],['GBPJPY,H1',76],['EURUSD,Daily',88],['USDCHF,Daily',88],['GBPUSD,Daily',88],['EURJPY,Daily',88],['USDJPY,Daily',88],['GBPJPY,Daily',84],['GBPUSD,H1',80],['EURUSD,H1',80],['CADJPY,M5',80],['EURUSD,M1',79]];
$('ctabs').innerHTML = ctabs.map(([t, w], i) => `<span class="flex shrink-0 items-center" style="width:${w}px"><button class="flex-1">${t}</button>${i < 17 ? '<i class="h-3 w-px bg-[#777]"></i>' : ''}</span>`).join('') +
  '<button class="-mt-px h-[19px] w-[120px] shrink-0 border border-t-0 border-b-2 border-black bg-white text-black">EURUSD,M2 (offline)</button><span class="ml-auto flex items-center gap-3 pr-1.5"><i class="border-y-4 border-r-[5px] border-y-transparent border-r-black"></i><i class="border-y-4 border-l-[5px] border-y-transparent border-l-[#999]"></i></span>';

// Chart. Bars are 16px apart; X(k) is the centre of bar k, y values count down the window.
const X = k => 256 + 16 * k;
const line = (x1, y1, x2, y2, c, w = 1, extra = '') => `<line x1="${x1}" y1="${y1}" x2="${x2}" y2="${y2}" stroke="${c}" stroke-width="${w}" ${extra}/>`;
const G = '#32cd32';
// Candles from bar 25: top of the body, 1 for a falling bar, end of the wick
const candles = [[397,1,379],[426,1,390],[455,1,431],[484,1,437],[455,0,491],[426,0,467],[397,0,438],[367,0,403],[397,1,344],[367,0,444],[338,0,391],[309,0,0],[279,0,333],[309,1,256],[279,0,362],[250,0,292],[221,0,0],[250,1,228],[221,0,292],[192,0,228],[162,0,233],[192,1,156],[221,1,191],[250,1,221],[279,1,0],[250,0,315],[221,0,286],[192,0,258],[221,1,197],[250,1,238],[279,1,273],[309,1,291],[338,1,285],[367,1,0],[397,1,0],[426,1,0],[397,0,450],[367,0,421],[338,0,391],[309,0,345],[279,0,333],[309,1,256],[338,1,326],[309,0,380],[279,0,0],[250,0,303],[221,0,0],[192,0,257],[221,1,174],[250,1,244],[221,0,298],[192,0,245],[162,0,0],[133,0,187]];
let s = line(0, 156.5, 4000, 156.5, '#8a949e') +
  line(0, 227.5, 4000, 227.5, '#2fa52f', 1, 'stroke-dasharray="9 5 3 5"') + line(0, 250.5, 4000, 250.5, '#c81414', 1, 'stroke-dasharray="9 5 3 5"');
candles.forEach(([t, f, w], i) => {
  const x = X(25 + i) + .5, low = w > t;
  if (w) s += line(x, low ? t + 30 : w, x, low ? w : t, G);
  s += `<rect x="${x - 5}" y="${t + .5}" width="10" height="29" fill="${f ? '#fff' : 'none'}" stroke="${G}"/>`;
});
s += line(1520.5, 127, 1520.5, 163, G) + line(1515, 156.5, 1526, 156.5, G);
const poly = (p, c, w, d = '') => `<polyline points="${p}" fill="none" stroke="${c}" stroke-width="${w}" ${d}/>`;
const orange = '#f05a24', green = '#52b07c', red = '#e01010', blue = '#4169e1';
['752,384 768,474','1024,287 1040,206','1072,206 1088,320','1136,320 1152,227','1249,359 1264,442'].forEach(p => s += poly(p, '#8a8a8a', 1, 'stroke-dasharray="4 4"'));
['640,275 645,285 656,312 672,332 688,368 704,384 752,384','1040,206 1072,206','1152,227 1168,234 1184,293 1200,327 1216,359 1249,359'].forEach(p => s += poly(p, orange, 2));
['768,474 800,474 816,463 832,417 848,398 864,390 880,390 896,370 912,331 944,331 960,301 976,291 992,288 1024,288','1088,322 1104,320 1136,320','1264,442 1280,405 1296,385 1312,382 1344,382 1360,380 1376,366 1392,321 1408,311 1424,302 1472,302 1488,265 1504,245 1520,231'].forEach(p => s += poly(p, green, 2));
const dotted = (pts, c, big) => { s += poly(pts.map(p => p.join()).join(' '), c, 1); pts.forEach(([x, y], i) => { if (x > 645) s += `<circle cx="${x}" cy="${y}" r="${big && !i ? 4.5 : 2.5}" fill="${c}"/>`; }); };
dotted([[640,255],[656,284],[672,314],[688,343],[704,372],[720,407],[736,407]], red);
dotted([[1024,149],[1040,149],[1056,202],[1072,202]], '#f00000', 1);
dotted([[1136,179],[1152,179],[1168,226],[1184,255],[1200,284],[1216,314],[1232,348],[1248,348]], '#f00000', 1);
dotted([[752,526],[768,526],[784,473],[800,449],[816,438],[832,438],[848,438],[864,386],[880,361],[896,351],[912,351],[928,351],[944,302],[960,292],[976,292],[992,292],[1008,269]], blue, 1);
dotted([[1088,321],[1104,321],[1120,298]], blue, 1);
dotted([[1264,468],[1280,468],[1296,420],[1312,386],[1328,386],[1344,380],[1360,380],[1376,380],[1392,380],[1408,333],[1424,298],[1440,298],[1456,292],[1472,292],[1488,292],[1504,292],[1520,234]], blue, 1);
const arrow = (x, y, up) => `<g transform="translate(${x} ${y}) scale(1 ${up ? 1 : -1})"><path d="M0-9L8-1V4L2-2V10H-2V-2L-8 4V-1Z" fill="${up ? '#00bfff' : '#ff4500'}"/></g>`;
[[863,239],[911,204],[991,139],[1087,175],[1167,268],[783,327],[1311,239],[1423,157]].forEach(a => s += arrow(...a, 0));
[[976,249],[943,309],[880,378],[799,461],[704,530],[1056,332],[1216,472],[1344,396],[1456,315],[1407,274]].forEach(a => s += arrow(...a, 1));
[99,109,120,131,142,153,164,173,182,191,199,206,213,219,224,229,233,236,240,243,245,246,247,249,251,253,255,257,258,260,261,263,265,268,271,275,280,284,288,292,294,296,298,300,302,303,303,302,301,300,299,298,295,293,289].forEach((y, i) => s += `<circle cx="${X(25 + i)}" cy="${y}" r="1.700" fill="${i > 45 ? '#0a0ab8' : '#d01818'}"/>`);
$('main').innerHTML = `<g transform="translate(-256 -74)">${s}</g><svg x="100%" class="overflow-visible"><path d="M-331 0h10l-5 6z" fill="#8a929c"/><text x="-19" y="12" text-anchor="end" fill="#fff" font-size="9">TrailingByHBB</text><g stroke="#fff" fill="none" transform="translate(-11 9)"><circle r="5.500"/><path d="M-2-2v1M2-2v1M-3 1q3 3 6 0"/></g></svg>`;

const hbars = (vals, base, w, col, oy) => `<g transform="translate(-256 ${-oy})">` + vals.map((v, k) => `<rect x="${X(k) - (w - 1) / 2 | 0}" y="${Math.min(v, base)}" width="${w}" height="${Math.abs(v - base) || 1}" fill="${col(k, v)}"/>`).join('') + '</g>';
const ao = [620,621,618,613,606,601,600,600,599,598,598,597,595,596,599,602,604,605,603,600,596,594,596,600,606,611,616,621,626,629,628,626,621,615,610,605,599,593,587,582,575,571,567,564,558,555,552,551,550,555,559,562,563,561,559,560,563,568,576,585,593,599,603,603,599,593,587,585,585,583,582,580,573,567,565,564,564,562,559,554];
const aoRed = [0,1,7,13,14,15,16,17,22,23,24,25,26,27,28,29,49,50,51,52,55,56,57,58,59,60,61,62];
$('ao').innerHTML = line(0, 31.5, 4000, 31.5, '#3d1a66', 1, 'stroke-dasharray="4 3"') + hbars(ao, 577, 7, k => aoRed.includes(k) ? '#f00' : '#00f', 546) + '<text x="4" y="12" fill="#fff">AO 0.00156</text>';
const uop = [714,707,694,676,668,669,680,686,681,676,681,684,689,701,715,725,726,717,703,693,693,697,705,714,720,725,726,725,723,718,710,701,692,685,680,670,657,645,640,641,642,642,644,647,647,645,646,651,661,675,686,686,677,673,680,693,706,715,722,727,728,723,714,703,691,680,671,671,670,663,654,646,641,641,647,653,654,649,644,642];
$('uop').innerHTML = hbars(uop, 678, 2, (k, v) => v > 678 ? '#b01c1c' : '#127a12', 635).replace(/width="2"( height="[^"]+" fill="#127a12")/g, 'width="3"$1') + '<text x="4" y="12" fill="#fff">UOPTraderIndicator (14, 5) 129.7747</text>';
$('ultra').innerHTML = hbars(Array(80).fill(737), 760, 5, k => k > 77 ? '#00f' : '#f00', 735) + '<text x="4" y="12" fill="#fff">ultra_filter_2_0 0.0000 1.0000</text>';
// Scale labels: y, text, tick height (0 for none)
const ax = (list, oy, x = 2) => list.map(([y, t, tick = y]) => `${tick ? `<path d="M0 ${tick - oy + .5}h2" stroke="#fff"/>` : ''}<text x="${x}" y="${y - oy + 3}" fill="#fff">${t}</text>`).join('');
$('axMain').innerHTML = ax([[104,'1.1185'],[162,'1.1175'],[221,'1.1165'],[279,'1.1155'],[338,'1.1145'],[396,'1.1135'],[455,'1.1125'],[513,'1.1115']], 73, 5) + '<rect x="1" y="77" width="36" height="11" fill="#fff"/><text x="5" y="86" fill="#000">1.1176</text>';
$('axAo').innerHTML = ax([[553,'0.00204',547],[577,'0.00'],[625,'-0.00359',631]], 545);
$('axUop').innerHTML = ax([[642,'153.6092',636],[678,'0.00'],[726,'-189.784',731]], 634);
$('axUltra').innerHTML = ax([[741,'1.05',736],[756,'-0.05',0],[759,'0.00',760]], 734);
$('time').innerHTML = ['2015','02:02','03:21','08:04','08:24','09:00','09:20','10:05','10:27','11:06','11:53','12:11','13:15','13:45','14:10','14:30','14:36','14:48','15:02','15:28'].map((t, i) => `<path d="M${i * 64 + 1.5} 0v4" stroke="#fff"/><text x="${i * 64}" y="12" fill="#fff">25 Sep ${t}</text>`).join('');
</script>
</body>
</html>
